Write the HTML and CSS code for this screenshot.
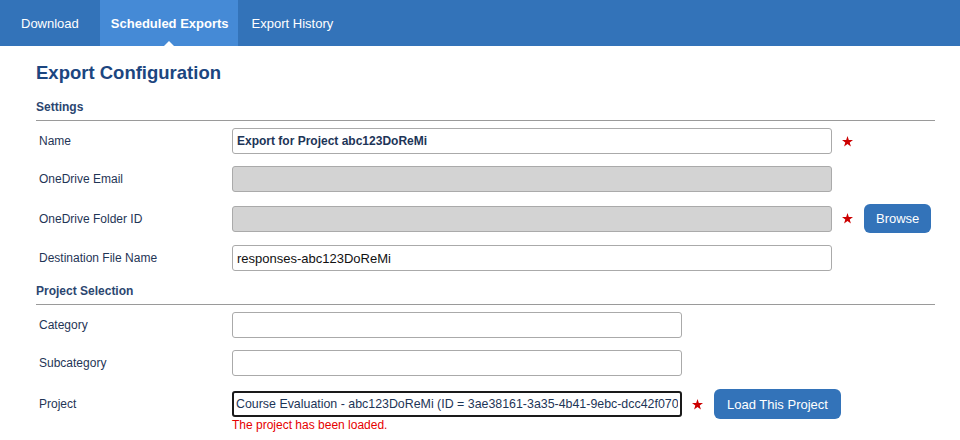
FILE: index.html
```html
<!DOCTYPE html>
<html lang="en">
<head>
    <meta charset="UTF-8">
    <title>Scheduled Exports</title>
    <link rel="stylesheet" href="styles.css">
</head>
<body>
    <ul class="tabs">
        <li><a href="#">Download</a></li>
        <li class="active"><a href="#">Scheduled Exports</a></li>
        <li><a href="#">Export History</a></li>
    </ul>

    <div class="page">
        <h1>Export Configuration</h1>

        <h2 class="section">Settings</h2>
        <div class="row">
            <label>Name</label>
            <div class="field">
                <input class="text-input wide strong" type="text" value="Export for Project abc123DoReMi">
                <svg class="req" viewBox="0 0 10 10"><polygon points="5,0 6.2,3.6 10,3.6 7,5.9 8.1,9.6 5,7.3 1.9,9.6 3,5.9 0,3.6 3.8,3.6"/></svg>
            </div>
        </div>
        <div class="row">
            <label>OneDrive Email</label>
            <div class="field">
                <input class="text-input wide" type="text" disabled>
            </div>
        </div>
        <div class="row">
            <label>OneDrive Folder ID</label>
            <div class="field">
                <input class="text-input wide" type="text" disabled>
                <svg class="req" viewBox="0 0 10 10"><polygon points="5,0 6.2,3.6 10,3.6 7,5.9 8.1,9.6 5,7.3 1.9,9.6 3,5.9 0,3.6 3.8,3.6"/></svg>
                <button class="btn">Browse</button>
            </div>
        </div>
        <div class="row">
            <label>Destination File Name</label>
            <div class="field">
                <input class="text-input wide plain" type="text" value="responses-abc123DoReMi">
            </div>
        </div>

        <h2 class="section">Project Selection</h2>
        <div class="row">
            <label>Category</label>
            <div class="field">
                <input class="text-input" type="text">
            </div>
        </div>
        <div class="row">
            <label>Subcategory</label>
            <div class="field">
                <input class="text-input" type="text">
            </div>
        </div>
        <div class="row top">
            <label>Project</label>
            <div class="field">
                <div class="stack">
                    <input class="text-input focused" type="text" value="Course Evaluation - abc123DoReMi (ID = 3ae38161-3a35-4b41-9ebc-dcc42f070">
                    <div class="msg">The project has been loaded.</div>
                </div>
                <svg class="req" viewBox="0 0 10 10"><polygon points="5,0 6.2,3.6 10,3.6 7,5.9 8.1,9.6 5,7.3 1.9,9.6 3,5.9 0,3.6 3.8,3.6"/></svg>
                <button class="btn load">Load This Project</button>
            </div>
        </div>
    </div>
</body>
</html>
```

FILE: styles.css
```css
body {
    margin: 0;
    font-family: "Liberation Sans", Arial, sans-serif;
    font-size: 12px;
    color: #1f3556;
    background-color: #fff;
}

/* top tabs */
.tabs {
    display: flex;
    margin: 0;
    padding: 0;
    list-style: none;
    height: 46px;
    background-color: #3373b9;
}

.tabs li {
    position: relative;
    display: flex;
}

.tabs a {
    display: flex;
    align-items: center;
    padding: 0 21px;
    color: #fff;
    font-size: 13px;
    text-decoration: none;
}

.tabs li.active {
    background-color: #458ad6;
}

.tabs li.active a {
    padding: 0 9px 0 11px;
    font-weight: bold;
}

.tabs li.active + li a {
    padding-left: 14px;
}

.tabs li.active::after {
    content: "";
    position: absolute;
    left: 50%;
    bottom: 0;
    margin-left: -5px;
    border-left: 5px solid transparent;
    border-right: 5px solid transparent;
    border-bottom: 5px solid #fff;
}

.page {
    padding: 0 25px 0 36px;
}

h1 {
    margin: 16px 0 0;
    font-size: 18.5px;
    line-height: 22px;
    color: #1c4680;
}

.section {
    margin: 15px 0 7px;
    padding-bottom: 5px;
    font-size: 12px;
    line-height: 16px;
    color: #2b4670;
    border-bottom: 1px solid #9a9a9a;
}

.row + .section {
    margin-top: 12px;
}

.row {
    display: grid;
    grid-template-columns: 196px 1fr;
    align-items: center;
    margin-bottom: 12px;
}

.row label {
    padding-left: 3px;
}

.row.top {
    align-items: start;
    margin-top: 13px;
}

.row.top label {
    padding-top: 2px;
    line-height: 26px;
}

.field {
    display: flex;
    align-items: center;
    gap: 10px;
}

.row.top .field {
    align-items: flex-start;
}

.row.top .stack {
    margin-top: 2px;
}

.row.top .req {
    margin-top: 10px;
}

.text-input {
    box-sizing: border-box;
    width: 450px;
    height: 26px;
    padding: 0 4px;
    border: 1px solid #aaa;
    border-radius: 3px;
    font-family: "Liberation Sans", Arial, sans-serif;
    font-size: 13px;
    color: #1d3557;
    background-color: #fff;
}

.text-input.wide {
    width: 600px;
}

.text-input.strong {
    font-size: 12px;
    font-weight: bold;
}

.text-input.plain {
    color: #111;
}

.text-input:disabled {
    background-color: #d3d3d3;
}

.text-input.focused {
    border: 2px solid #1a1a1a;
    padding: 0 2px;
    font-size: 12.4px;
}

.stack {
    display: flex;
    flex-direction: column;
}

.msg {
    margin-top: 1px;
    color: #e60000;
    line-height: 14px;
}

.req {
    width: 11px;
    height: 11px;
    fill: #cc0000;
}

.btn {
    margin-left: 1px;
    height: 29px;
    padding: 0 12px;
    border: none;
    border-radius: 6px;
    background-color: #3373b9;
    color: #fff;
    font-family: "Liberation Sans", Arial, sans-serif;
    font-size: 13px;
    cursor: pointer;
}

.btn.load {
    height: 30px;
    padding: 0 13px;
}
```
